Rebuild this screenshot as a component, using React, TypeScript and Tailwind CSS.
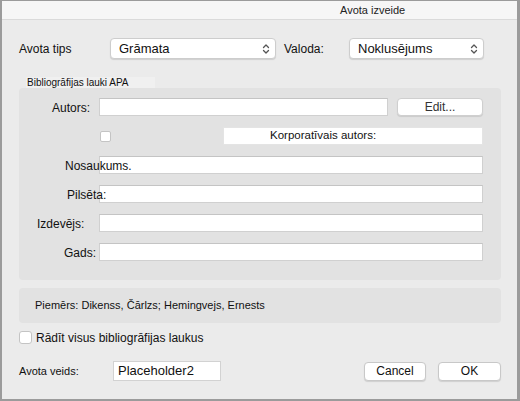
import React from "react";

const font = { fontFamily: '"Liberation Sans", Arial, sans-serif' };

function Chevrons() {
  return (
    <svg width="8" height="12" viewBox="0 0 8 12" fill="none" stroke="#555" strokeWidth="1.3" strokeLinecap="round" strokeLinejoin="round">
      <path d="M1.5 4.5 L4 2 L6.5 4.5" />
      <path d="M1.5 7.5 L4 10 L6.5 7.5" />
    </svg>
  );
}

function Select({ value, w }: { value: string; w: string }) {
  return (
    <div className={`${w} h-[21px] bg-white rounded-[4px] border border-[#cdcdcd] shadow-[0_1px_1px_rgba(0,0,0,0.12)] flex items-center pl-[8px] pr-[5px]`}>
      <span className="text-[13px] text-[#111] flex-1 leading-none">{value}</span>
      <Chevrons />
    </div>
  );
}

function Input({ className = "" }: { className?: string }) {
  return <div className={`h-[18px] bg-white border border-[#d0d0d0] border-t-[#c4c4c4] ${className}`} />;
}

function Row({ label, pl }: { label: string; pl: string }) {
  return (
    <div className="flex items-center h-[18px]">
      <div className={`w-[80px] shrink-0 ${pl} relative z-10 whitespace-nowrap text-[12px] text-[#111] leading-none pt-[2px]`}>
        <span className="relative z-10">{label}</span>
      </div>
      <Input className="flex-1" />
    </div>
  );
}

export default function App() {
  return (
    <div style={font} className="w-[520px] h-[401px] border-l-2 border-r-[3px] border-t border-b-2 border-[#9b9b9b] bg-[#ebebeb] flex flex-col text-[#111]">
      <div className="h-[19px] shrink-0 bg-[#f6f6f6] border-b border-[#dadada] pl-[338px] text-[11px] leading-[18px] text-[#222]">
        Avota izveide
      </div>
      <div className="pl-[17px] pr-[16px] flex flex-col">
        <div className="mt-[18px] h-[21px] flex items-center">
          <div className="w-[91px] text-[12px]">Avota tips</div>
          <Select value="Grāmata" w="w-[166px]" />
          <div className="ml-[8px] w-[65px] text-[12px]">Valoda:</div>
          <Select value="Noklusējums" w="w-[135px]" />
        </div>

        <div className="mt-[18px] ml-[7px] w-[129px] h-[11px] bg-[#f0f0f0] pl-[1px] text-[10px] leading-[11px] whitespace-nowrap">
          Bibliogrāfijas lauki APA
        </div>
        <div className="h-[192px] rounded-[4px] bg-[#e2e2e2] pt-[10px] pr-[18px] flex flex-col gap-[11px]">
          <div className="flex items-center h-[18px]">
            <div className="w-[80px] shrink-0 pl-[33px] text-[12px] leading-none pt-[2px]">Autors:</div>
            <Input className="w-[289px]" />
            <div className="ml-[9px] flex-1 h-[18px] bg-white rounded-[4px] border border-[#cfcfcf] shadow-[0_1px_1px_rgba(0,0,0,0.1)] flex items-center justify-center text-[12px] text-[#333]">
              Edit...
            </div>
          </div>
          <div className="flex items-center h-[18px]">
            <div className="ml-[81px] w-[11px] h-[11px] bg-white border border-[#c4c4c4] rounded-[2px]" />
            <div className="ml-[112px] flex-1 h-[18px] bg-white border border-[#e4e4e4] flex items-center pl-[46px] text-[11.5px] whitespace-nowrap">
              Korporatīvais autors:
            </div>
          </div>
          <Row label="Nosaukums." pl="pl-[46px]" />
          <Row label="Pilsēta:" pl="pl-[48px]" />
          <Row label="Izdevējs:" pl="pl-[18px]" />
          <Row label="Gads:" pl="pl-[45px]" />
        </div>

        <div className="mt-[8px] h-[35px] rounded-[4px] bg-[#e2e2e2] pl-[16px] flex items-center text-[11px] whitespace-nowrap">
          Piemērs: Dikenss, Čārlzs; Hemingvejs, Ernests
        </div>

        <div className="mt-[8px] h-[13px] flex items-center">
          <div className="w-[13px] h-[13px] bg-white border border-[#c4c4c4] rounded-[3px]" />
          <div className="ml-[4px] text-[12px] whitespace-nowrap">Rādīt visus bibliogrāfijas laukus</div>
        </div>

        <div className="mt-[17px] h-[20px] flex items-center">
          <div className="w-[94px] text-[11px]">Avota veids:</div>
          <div className="w-[108px] h-[20px] bg-white border border-[#d2d2d2] flex items-center pl-[4px] text-[13px]">
            Placeholder2
          </div>
          <div className="ml-auto w-[62px] h-[19px] bg-white rounded-[4px] border border-[#c8c8c8] shadow-[0_1px_1px_rgba(0,0,0,0.12)] flex items-center justify-center text-[12px]">
            Cancel
          </div>
          <div className="ml-[12px] w-[63px] h-[19px] bg-white rounded-[4px] border border-[#c8c8c8] shadow-[0_1px_1px_rgba(0,0,0,0.12)] flex items-center justify-center text-[12px]">
            OK
          </div>
        </div>
      </div>
    </div>
  );
}
